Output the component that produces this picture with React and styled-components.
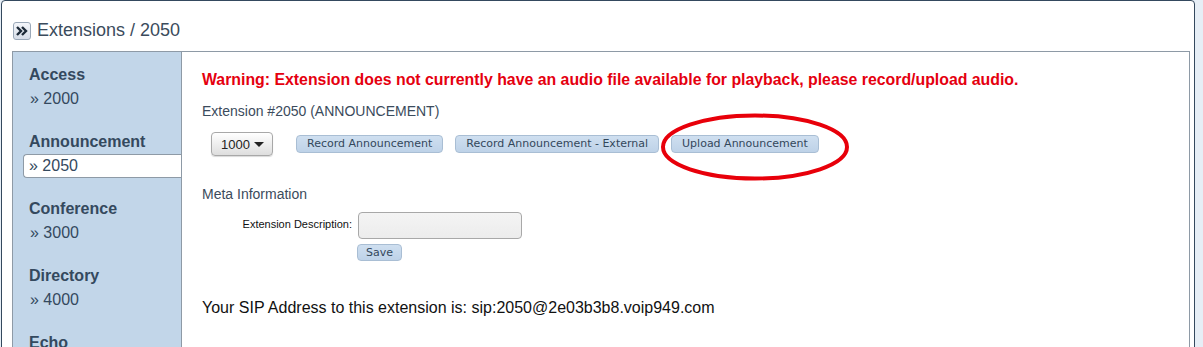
import styled, { createGlobalStyle } from 'styled-components';

const GlobalStyle = createGlobalStyle`
  html, body {
    margin: 0;
    padding: 0;
    background: #e6eef6;
    font-family: "Liberation Sans", Arial, sans-serif;
    overflow: hidden;
  }
`;

const sections = [
  { title: 'Access', ext: '2000' },
  { title: 'Announcement', ext: '2050', active: true },
  { title: 'Conference', ext: '3000' },
  { title: 'Directory', ext: '4000' },
  { title: 'Echo', ext: '5000' },
];

export default function App() {
  return (
    <>
      <GlobalStyle />
      <Panel>
        <Header>
          <ToggleIcon>
            <svg width="12" height="10" viewBox="0 0 12 10">
              <path d="M1 1 L5 5 L1 9" fill="none" stroke="#1d2a38" strokeWidth="2.4" />
              <path d="M6 1 L10 5 L6 9" fill="none" stroke="#1d2a38" strokeWidth="2.4" />
            </svg>
          </ToggleIcon>
          <Title>Extensions / 2050</Title>
        </Header>
        <Frame>
          <Sidebar>
            {sections.map((s) => (
              <Group key={s.title}>
                <GroupTitle>{s.title}</GroupTitle>
                <GroupItem $active={s.active}>» {s.ext}</GroupItem>
              </Group>
            ))}
          </Sidebar>
          <Content>
            <Warning>
              Warning: Extension does not currently have an audio file available for playback, please record/upload audio.
            </Warning>
            <SubTitle>Extension #2050 (ANNOUNCEMENT)</SubTitle>
            <ActionRow>
              <Select>
                1000
                <Caret />
              </Select>
              <SmallButton>Record Announcement</SmallButton>
              <SmallButton>Record Announcement - External</SmallButton>
              <Circled>
                <SmallButton>Upload Announcement</SmallButton>
                <Ellipse viewBox="0 0 190 68" width="190" height="68">
                  <ellipse cx="95" cy="34" rx="92" ry="31.5" fill="none" stroke="#e8000a" strokeWidth="4" />
                </Ellipse>
              </Circled>
            </ActionRow>
            <SectionHead>Meta Information</SectionHead>
            <FormRow>
              <Label>Extension Description:</Label>
              <FieldCol>
                <TextInput />
                <SaveButton>Save</SaveButton>
              </FieldCol>
            </FormRow>
            <SipLine>Your SIP Address to this extension is: sip:2050@2e03b3b8.voip949.com</SipLine>
          </Content>
        </Frame>
      </Panel>
    </>
  );
}

const Panel = styled.div`
  margin-left: 1px;
  width: 1194px;
  height: 400px;
  background: #fff;
  border: 1px solid #34495e;
  border-radius: 4px 4px 0 0;
  box-sizing: border-box;
  overflow: hidden;
`;

const Header = styled.div`
  display: flex;
  align-items: center;
  height: 50px;
  padding: 9px 0 0 11px;
  box-sizing: border-box;
`;

const ToggleIcon = styled.span`
  display: flex;
  align-items: center;
  justify-content: center;
  width: 18px;
  height: 18px;
  box-sizing: border-box;
  border: 1px solid #9aa8b8;
  border-radius: 3px;
  background: linear-gradient(#f4f6fa, #d6dde8);
  margin-right: 6px;
`;

const Title = styled.span`
  font-size: 18px;
  color: #3b4b5c;
`;

const Frame = styled.div`
  display: grid;
  grid-template-columns: 169px 1fr;
  margin-left: 10px;
  width: 1178px;
  height: 320px;
  border: 1px solid #8e9aa6;
  box-sizing: border-box;
`;

const Sidebar = styled.div`
  background: #c2d6e9;
  border-right: 1px solid #8e9aa6;
  padding-top: 11px;
  overflow: hidden;
`;

const Group = styled.div`
  margin-bottom: 19px;
`;

const GroupTitle = styled.div`
  font-size: 16px;
  font-weight: bold;
  line-height: 24px;
  color: #34495e;
  padding-left: 16px;
`;

const GroupItem = styled.div`
  font-size: 16px;
  line-height: 22px;
  height: 24px;
  box-sizing: border-box;
  color: #34495e;
  padding-left: ${(p) => (p.$active ? '5px' : '16px')};
  margin-left: ${(p) => (p.$active ? '10px' : '0')};
  margin-right: ${(p) => (p.$active ? '-1px' : '0')};
  background: ${(p) => (p.$active ? '#fff' : 'transparent')};
  border: ${(p) => (p.$active ? '1px solid #8e9aa6' : '1px solid transparent')};
  border-right: none;
  border-radius: 4px 0 0 4px;
  position: relative;
`;

const Content = styled.div`
  padding: 18px 0 0 20px;
`;

const Warning = styled.div`
  font-size: 15.85px;
  font-weight: bold;
  color: #e5000f;
  line-height: 20px;
`;

const SubTitle = styled.div`
  font-size: 14px;
  color: #3b4b5c;
  margin-top: 12px;
  line-height: 18px;
`;

const ActionRow = styled.div`
  display: flex;
  align-items: center;
  gap: 12px;
  margin-top: 11px;
  padding-left: 9px;
  height: 26px;
`;

const Select = styled.div`
  display: flex;
  align-items: center;
  justify-content: space-between;
  width: 62px;
  height: 24px;
  box-sizing: border-box;
  padding: 0 8px 0 9px;
  border: 1px solid #a8a8a8;
  border-radius: 4px;
  background: linear-gradient(#ffffff, #dedede);
  font-size: 13px;
  color: #222;
  margin-right: 11px;
  box-shadow: 0 1px 1px rgba(0, 0, 0, 0.15);
`;

const Caret = styled.span`
  width: 0;
  height: 0;
  border-left: 5px solid transparent;
  border-right: 5px solid transparent;
  border-top: 5px solid #222;
`;

const SmallButton = styled.button`
  height: 18px;
  padding: 0 10px;
  border: 1px solid #a9bed4;
  border-radius: 4px;
  background: linear-gradient(#cfdff0, #bed2e8);
  font-family: "DejaVu Sans", Verdana, sans-serif;
  font-size: 11px;
  line-height: 16px;
  color: #33475b;
  cursor: pointer;
`;

const Circled = styled.div`
  position: relative;
  display: flex;
`;

const Ellipse = styled.svg`
  position: absolute;
  left: -11px;
  top: -22px;
  pointer-events: none;
  overflow: visible;
`;

const SectionHead = styled.div`
  font-size: 14px;
  color: #3b4b5c;
  margin-top: 28px;
  line-height: 18px;
`;

const FormRow = styled.div`
  display: flex;
  align-items: flex-start;
  margin-top: 9px;
`;

const Label = styled.div`
  width: 150px;
  text-align: right;
  font-size: 11px;
  color: #111;
  padding-top: 6px;
  margin-right: 6px;
`;

const FieldCol = styled.div`
  display: flex;
  flex-direction: column;
  align-items: flex-start;
  gap: 5px;
`;

const TextInput = styled.input`
  width: 164px;
  height: 27px;
  box-sizing: border-box;
  border: 1px solid #a8a8a8;
  border-radius: 4px;
  background: linear-gradient(#f4f4f4, #ececec);
  margin: 0;
`;

const SaveButton = styled(SmallButton)`
  height: 17px;
  padding: 0 8px;
  margin-left: -1px;
`;

const SipLine = styled.div`
  font-size: 16px;
  color: #111;
  margin-top: 38px;
`;
